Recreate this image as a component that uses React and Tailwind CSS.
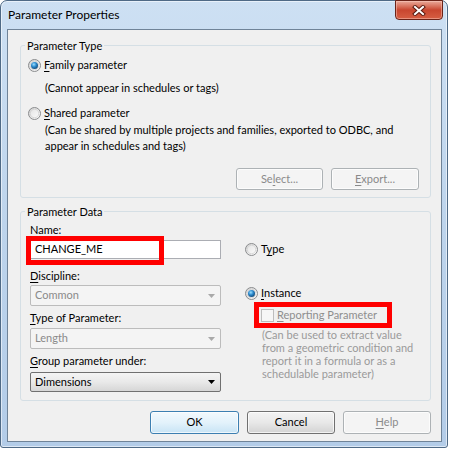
import React from "react";

const U = ({ children }) => (
  <span className="underline underline-offset-[2px] decoration-[1px]">{children}</span>
);

const Radio = ({ checked }) => (
  <svg width="13" height="13" viewBox="0 0 13 13" className="shrink-0">
    <defs>
      <linearGradient id="rOuter" x1="0" y1="0" x2="1" y2="1">
        <stop offset="0" stopColor="#cfcfcf" />
        <stop offset="1" stopColor="#ffffff" />
      </linearGradient>
      <linearGradient id="rInner" x1="0" y1="0" x2="1" y2="1">
        <stop offset="0" stopColor="#e4e4e4" />
        <stop offset="1" stopColor="#fbfbfb" />
      </linearGradient>
      <radialGradient id="rDot" cx="0.4" cy="0.35" r="0.75">
        <stop offset="0" stopColor="#9be0ff" />
        <stop offset="0.45" stopColor="#2c8ace" />
        <stop offset="1" stopColor="#0c3c66" />
      </radialGradient>
    </defs>
    <circle cx="6.5" cy="6.5" r="6" fill="url(#rOuter)" stroke="#8a8c8e" />
    <circle cx="6.5" cy="6.5" r="4.2" fill="url(#rInner)" stroke="#d2d2d2" strokeWidth="0.8" />
    {checked && <circle cx="6.5" cy="6.5" r="3.5" fill="url(#rDot)" />}
  </svg>
);

const Btn = ({ children, kind = "normal", className = "" }) => {
  const styles = {
    normal: "border-[#707070] bg-gradient-to-b from-[#f3f3f3] via-[#e8e8e8] to-[#d3d3d3] text-black",
    default: "border-[#3c7fb1] bg-gradient-to-b from-[#f2f9fd] via-[#e3f2fb] to-[#c8e4f5] text-black",
    disabled: "border-[#adb2b5] bg-[#f4f4f4] text-[#8a8a8a]",
  };
  return (
    <div
      className={`flex items-center justify-center rounded-[3px] border shadow-[inset_0_0_0_1px_rgba(255,255,255,0.7)] ${styles[kind]} ${className}`}
    >
      {children}
    </div>
  );
};

const Select = ({ value, disabled, className = "" }) => (
  <div
    className={`w-[191px] flex items-center justify-between pl-[4px] pr-[5px] rounded-[2px] border ${
      disabled
        ? "border-[#bcbcbc] bg-[#f4f4f4] text-[#8a8a8a]"
        : "border-[#707070] bg-gradient-to-b from-[#f4f4f4] via-[#e9e9e9] to-[#d6d6d6] text-black"
    } ${className}`}
  >
    <span>{value}</span>
    <svg width="7" height="4" viewBox="0 0 7 4">
      <path d="M0 0H7L3.5 4Z" fill={disabled ? "#a9a9a9" : "#000"} />
    </svg>
  </div>
);

const GroupBox = ({ title, className = "", children }) => (
  <div className={`ml-[12px] w-[411px] rounded-[3px] border border-[#d5dfe5] ${className}`}>
    <div className="-mt-[8px] ml-[4px] w-fit px-[2px] bg-[#f0f0f0] leading-[15px]">{title}</div>
    {children}
  </div>
);

export default function App() {
  return (
    <div className="w-[449px] h-[449px] bg-white text-[11px] text-black font-['Segoe_UI',Lato,sans-serif]">
      <div className="w-[448px] h-[448px] flex flex-col rounded-t-[7px] rounded-b-[3px] border border-[#4f6a86] bg-gradient-to-b from-[#cde0f3] via-[#bdd4ec] to-[#b3cce8] shadow-[inset_0_0_0_1px_rgba(255,255,255,0.55)]">
        {/* Title bar */}
        <div className="h-[28px] flex items-start justify-between pl-[7px] pr-[4px]">
          <span className="pt-[6px] leading-[15px] text-[12px]">Parameter Properties</span>
          <div className="-mt-[1px] w-[48px] h-[20px] flex items-center justify-center rounded-b-[4px] border border-[#6b2318] bg-gradient-to-b from-[#e9a99a] via-[#c9462f] to-[#d65e43] shadow-[inset_0_0_0_1px_rgba(255,210,200,0.45)]">
            <svg width="14" height="11" viewBox="0 0 14 11">
              <path d="M3 2L11 9M11 2L3 9" stroke="#5a1a10" strokeWidth="4" strokeLinecap="square" />
              <path d="M3 2L11 9M11 2L3 9" stroke="#ffffff" strokeWidth="2" strokeLinecap="square" />
            </svg>
          </div>
        </div>

        {/* Client area */}
        <div className="ml-[6px] w-[435px] h-[413px] border border-[#6f8398] bg-[#f0f0f0]">
          <GroupBox title="Parameter Type" className="mt-[15px] h-[153px]">
            <div className="mt-[4px] h-[16px] flex items-center gap-[3px] pl-[7px]">
              <Radio checked />
              <span>
                <U>F</U>amily parameter
              </span>
            </div>
            <div className="mt-[7px] pl-[24px] leading-[16px]">(Cannot appear in schedules or tags)</div>
            <div className="mt-[9px] h-[16px] flex items-center gap-[3px] pl-[7px]">
              <Radio />
              <span>
                <U>S</U>hared parameter
              </span>
            </div>
            <div className="mt-[1px] pl-[24px] leading-[16px]">
              (Can be shared by multiple projects and families, exported to ODBC, and
              <br />
              appear in schedules and tags)
            </div>
            <div className="mt-[14px] flex justify-end gap-[8px] pr-[11px]">
              <Btn kind="disabled" className="w-[87px] h-[22px]">
                <span>
                  Se<U>l</U>ect...
                </span>
              </Btn>
              <Btn kind="disabled" className="w-[88px] h-[22px]">
                <span>
                  <U>E</U>xport...
                </span>
              </Btn>
            </div>
          </GroupBox>

          <GroupBox title="Parameter Data" className="mt-[13px] h-[190px]">
            <div className="flex">
              {/* Left column */}
              <div className="pl-[9px] w-[200px] flex flex-col">
                <div className="mt-[3px] leading-[15px]">Name:</div>
                <div className="relative mt-[3px] w-[191px] h-[19px] border border-[#abadb3] bg-white flex items-center pl-[4px]">
                  <span>CHANGE_ME</span>
                  <div className="absolute -left-[5px] -top-[5px] w-[138px] h-[29px] border-[5px] border-[#ff0000]" />
                </div>
                <div className="mt-[9px] leading-[15px]">
                  <U>D</U>iscipline:
                </div>
                <Select value="Common" disabled className="mt-[2px] h-[21px]" />
                <div className="mt-[4px] leading-[15px]">
                  <U>T</U>ype of Parameter:
                </div>
                <Select value="Length" disabled className="mt-[3px] h-[21px]" />
                <div className="mt-[4px] leading-[15px]">
                  <U>G</U>roup parameter under:
                </div>
                <Select value="Dimensions" className="mt-[4px] h-[20px]" />
              </div>

              {/* Right column */}
              <div className="ml-[24px] flex flex-col">
                <div className="mt-[22px] h-[16px] flex items-center gap-[3px]">
                  <Radio />
                  <span>
                    T<U>y</U>pe
                  </span>
                </div>
                <div className="mt-[28px] h-[16px] flex items-center gap-[3px]">
                  <Radio checked />
                  <span>
                    <U>I</U>nstance
                  </span>
                </div>
                <div className="mt-[1px] ml-[9px] w-[138px] h-[26px] border-[5px] border-[#ff0000] flex items-center gap-[3px] pl-[2px] text-[#8e8e8e]">
                  <div className="w-[13px] h-[13px] border border-[#bdbdbd] bg-[#f6f6f6]" />
                  <span>
                    <U>R</U>eporting Parameter
                  </span>
                </div>
                <div className="ml-[17px] leading-[13px] text-[#9a9a9a]">
                  (Can be used to extract value
                  <br />
                  from a geometric condition and
                  <br />
                  report it in a formula or as a
                  <br />
                  schedulable parameter)
                </div>
              </div>
            </div>
          </GroupBox>

          <div className="mt-[10px] flex justify-end gap-[8px] pr-[10px]">
            <Btn kind="default" className="w-[89px] h-[23px]">
              OK
            </Btn>
            <Btn className="w-[88px] h-[23px]">Cancel</Btn>
            <Btn kind="disabled" className="w-[88px] h-[23px]">
              <span>
                <U>H</U>elp
              </span>
            </Btn>
          </div>
        </div>
      </div>
    </div>
  );
}
